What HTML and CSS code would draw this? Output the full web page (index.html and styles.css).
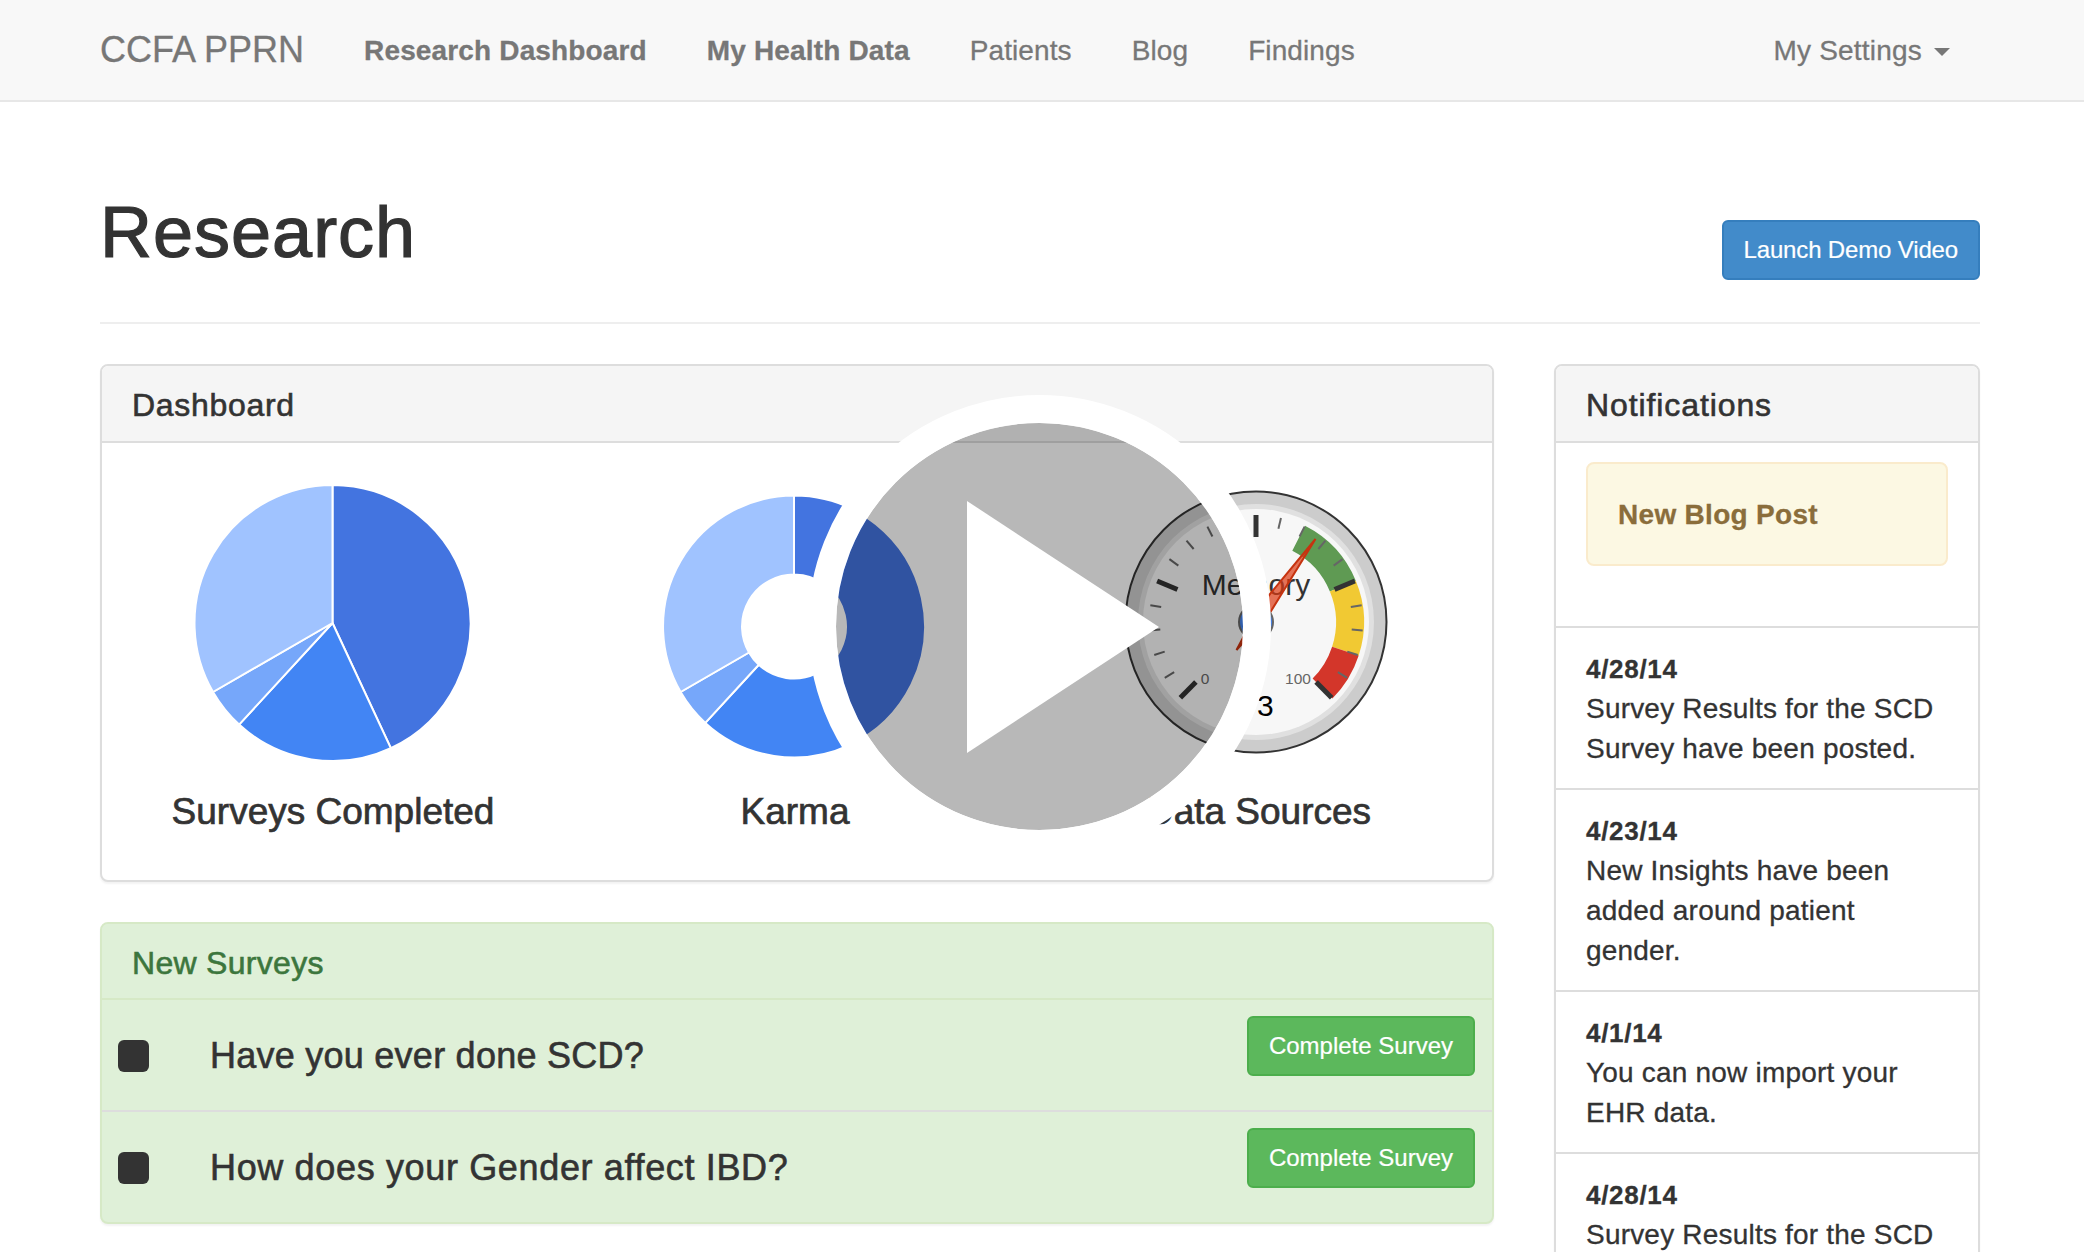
FILE: index.html
```html
<!DOCTYPE html>
<html lang="en">
<head>
    <meta charset="UTF-8">
    <meta name="viewport" content="width=device-width, initial-scale=1.0">
    <title>CCFA PPRN</title>

    <link rel="stylesheet" href="styles.css">
</head>


<body>
    <nav class="navbar">
        <a class="brand">CCFA PPRN</a>
        <a class="nav-link bold">Research Dashboard</a>
        <a class="nav-link bold">My Health Data</a>
        <a class="nav-link">Patients</a>
        <a class="nav-link">Blog</a>
        <a class="nav-link">Findings</a>
        <a class="nav-link settings">My Settings <span class="caret"></span></a>
    </nav>

    <div class="container">
        <div class="page-header">
            <h1>Research</h1>
            <button class="btn btn-blue demo-btn">Launch Demo Video</button>
        </div>

        <div class="columns">
            <div class="main-col">
                <div class="panel">
                    <div class="panel-heading">Dashboard</div>
                    <div class="charts">
                        <div class="chart">
                            <svg class="chart-svg" viewBox="0 0 320 320">
                                <g transform="translate(159.5 161)" stroke="#fff" stroke-width="2">
                                    <path fill="#4374e0" d="M0,0 L0,-138 A138,138 0 0 1 58.3,125.1 Z"/>
                                    <path fill="#4285f4" d="M0,0 L58.3,125.1 A138,138 0 0 1 -93.4,101.6 Z"/>
                                    <path fill="#76a7fa" d="M0,0 L-93.4,101.6 A138,138 0 0 1 -119.5,69 Z"/>
                                    <path fill="#a0c3ff" d="M0,0 L-119.5,69 A138,138 0 0 1 0,-138 Z"/>
                                </g>
                            </svg>
                            <h4>Surveys Completed</h4>
                        </div>

                        <div class="chart">
                            <svg class="chart-svg" viewBox="0 0 320 320">
                                <g transform="translate(159 164.5)" stroke="#fff" stroke-width="2">
                                    <path fill="#4374e0" d="M0,-131 A131,131 0 0 1 55.4,118.7 L22,47.1 A52,52 0 0 0 0,-52 Z"/>
                                    <path fill="#4285f4" d="M55.4,118.7 A131,131 0 0 1 -88.7,96.4 L-35.2,38.3 A52,52 0 0 0 22,47.1 Z"/>
                                    <path fill="#76a7fa" d="M-88.7,96.4 A131,131 0 0 1 -113.4,65.5 L-45,26 A52,52 0 0 0 -35.2,38.3 Z"/>
                                    <path fill="#a0c3ff" d="M-113.4,65.5 A131,131 0 0 1 0,-131 L0,-52 A52,52 0 0 0 -45,26 Z"/>
                                </g>
                            </svg>
                            <h4>Karma</h4>
                        </div>

                        <div class="chart">
                            <svg class="chart-svg" viewBox="0 0 320 320">
                                <g transform="translate(159 160)">
                                    <circle r="130.5" fill="#ccc" stroke="#333" stroke-width="2"/>
                                    <circle r="118" fill="#e0e0e0"/>
                                    <circle r="113" fill="#f7f7f7"/>

                                    <path fill="#5f9a53" d="M49,-96.2 A108,108 0 0 1 99.8,-41.3 L73.9,-30.6 A80,80 0 0 0 36.3,-71.3 Z"/>
                                    <path fill="#f1c933" d="M99.8,-41.3 A108,108 0 0 1 102.7,33.4 L76.1,24.7 A80,80 0 0 0 73.9,-30.6 Z"/>
                                    <path fill="#d3362a" d="M102.7,33.4 A108,108 0 0 1 76.4,76.4 L56.6,56.6 A80,80 0 0 0 76.1,24.7 Z"/>

                                    <g class="major">
                                        <line y1="-85" y2="-107" transform="rotate(-135)"/>
                                        <line y1="-85" y2="-107" transform="rotate(-67.5)"/>
                                        <line y1="-85" y2="-107" transform="rotate(0)"/>
                                        <line y1="-85" y2="-107" transform="rotate(67.5)"/>
                                        <line y1="-85" y2="-107" transform="rotate(135)"/>
                                    </g>
                                    <g class="minor">
                                        <line y1="-96" y2="-107" transform="rotate(-121.5)"/>
                                        <line y1="-96" y2="-107" transform="rotate(-108)"/>
                                        <line y1="-96" y2="-107" transform="rotate(-94.5)"/>
                                        <line y1="-96" y2="-107" transform="rotate(-81)"/>
                                        <line y1="-96" y2="-107" transform="rotate(-54)"/>
                                        <line y1="-96" y2="-107" transform="rotate(-40.5)"/>
                                        <line y1="-96" y2="-107" transform="rotate(-27)"/>
                                        <line y1="-96" y2="-107" transform="rotate(-13.5)"/>
                                        <line y1="-96" y2="-107" transform="rotate(13.5)"/>
                                        <line y1="-96" y2="-107" transform="rotate(27)"/>
                                        <line y1="-96" y2="-107" transform="rotate(40.5)"/>
                                        <line y1="-96" y2="-107" transform="rotate(54)"/>
                                        <line y1="-96" y2="-107" transform="rotate(81)"/>
                                        <line y1="-96" y2="-107" transform="rotate(94.5)"/>
                                        <line y1="-96" y2="-107" transform="rotate(108)"/>
                                        <line y1="-96" y2="-107" transform="rotate(121.5)"/>
                                    </g>

                                    <text class="gauge-title" y="-27" text-anchor="middle">Memory</text>
                                    <text class="gauge-value" x="1" y="94" text-anchor="middle">63</text>
                                    <text class="gauge-limit" x="-51" y="62" text-anchor="middle">0</text>
                                    <text class="gauge-limit" x="42" y="62" text-anchor="middle">100</text>

                                    <polygon class="needle" points="59.5,-83 13.6,-8.7 -19.5,28 3.8,-15.7"/>
                                    <circle r="17" fill="#4684ee" stroke="#666" stroke-width="2"/>
                                </g>
                            </svg>
                            <h4 class="last-label">Data Sources</h4>
                        </div>
                    </div>
                </div>

                <div class="panel panel-green">
                    <div class="panel-heading">New Surveys</div>
                    <div class="survey">
                        <span class="box"></span>
                        <span class="question">Have you ever done SCD?</span>
                        <button class="btn btn-green">Complete Survey</button>
                    </div>
                    <div class="survey survey-grey">
                        <span class="box"></span>
                        <span class="question question-wide">How does your Gender affect IBD?</span>
                        <button class="btn btn-green">Complete Survey</button>
                    </div>
                </div>
            </div>

            <div class="side-col">
                <div class="panel panel-notes">
                    <div class="panel-heading">Notifications</div>
                    <div class="notes-top">
                        <div class="alert">New Blog Post</div>
                    </div>
                    <div class="note">
                        <div class="date">4/28/14</div>
                        Survey Results for the SCD Survey have been posted.
                    </div>
                    <div class="note">
                        <div class="date">4/23/14</div>
                        New Insights have been added around patient gender.
                    </div>
                    <div class="note">
                        <div class="date">4/1/14</div>
                        You can now import your EHR data.
                    </div>
                    <div class="note">
                        <div class="date">4/28/14</div>
                        Survey Results for the SCD Survey have been posted.
                    </div>
                </div>
            </div>
        </div>
    </div>

    <div class="play">
        <div class="triangle"></div>
    </div>
</body>
</html>
```

FILE: styles.css
```css
html, body{
    height: 100%;
    overflow: hidden;
}

body{
    margin: 0;
    position: relative;
    background-color: white;
    color: #333;
    font-family: "Liberation Sans", Arial, sans-serif;
    font-size: 28px;
    line-height: 40px;
    -webkit-text-stroke: 0.3px;
}

.navbar{
    display: flex;
    align-items: center;
    height: 100px;
    padding: 0 104px 0 100px;
    background-color: #f8f8f8;
    border-bottom: 2px solid #e7e7e7;
    color: #777;
}

.brand{
    font-size: 36px;
    margin-right: 30px;
}

.nav-link{
    padding: 2px 30px 0;
    letter-spacing: 0.1px;
}

.bold{
    font-weight: bold;
    letter-spacing: 0.15px;
}

.settings{
    margin-left: auto;
    display: flex;
    align-items: center;
    gap: 12px;
    padding-right: 30px;
    letter-spacing: 0.2px;
}

.caret{
    width: 0;
    height: 0;
    margin-top: 2px;
    border-top: 8px solid #777;
    border-left: 8px solid transparent;
    border-right: 8px solid transparent;
}

.container{
    width: 1880px;
    margin-left: 100px;
}

.page-header{
    display: flex;
    justify-content: space-between;
    align-items: flex-start;
    height: 220px;
    margin-bottom: 40px;
    border-bottom: 2px solid #eee;
}

h1{
    margin: 91px 0 0;
    font-size: 72px;
    font-weight: normal;
    line-height: 79px;
    letter-spacing: 1px;
    -webkit-text-stroke: 1.2px;
}

.btn{
    height: 60px;
    padding: 0 20px;
    border-radius: 6px;
    color: white;
    font-family: "Liberation Sans", Arial, sans-serif;
    font-size: 24px;
    -webkit-text-stroke: 0.2px;
}

.btn-blue{
    background-color: #428bca;
    border: 2px solid #357ebd;
}

.btn-green{
    background-color: #5cb85c;
    border: 2px solid #4cae4c;
}

.demo-btn{
    margin-top: 118px;
    letter-spacing: -0.15px;
}

.columns{
    display: flex;
    gap: 60px;
}

.main-col{
    width: 1394px;
}

.side-col{
    width: 426px;
}

.panel{
    border: 2px solid #ddd;
    border-radius: 8px;
    margin-bottom: 40px;
    background-color: white;
    box-shadow: 0 2px 2px rgba(0, 0, 0, 0.05);
}

.panel-heading{
    height: 73px;
    padding: 2px 30px 0;
    display: flex;
    align-items: center;
    background-color: #f5f5f5;
    border-bottom: 2px solid #ddd;
    border-radius: 6px 6px 0 0;
    font-size: 32px;
    letter-spacing: 0.7px;
    -webkit-text-stroke: 0.6px;
}

.charts{
    display: flex;
    height: 437px;
    padding: 19px 4px 0 0;
    box-sizing: border-box;
}

.chart{
    flex: 1;
    text-align: center;
}

.chart-svg{
    display: block;
    width: 320px;
    height: 320px;
    margin: 0 auto;
    -webkit-text-stroke: 0;
}

h4{
    margin: 10px 0 0;
    font-size: 37px;
    font-weight: normal;
    line-height: 40px;
    -webkit-text-stroke: 0.7px;
}

.last-label{
    padding-left: 4px;
}

.major line{
    stroke: #333;
    stroke-width: 5;
}

.minor line{
    stroke: #666;
    stroke-width: 2;
}

.gauge-title{
    font-size: 30px;
    fill: #333;
}

.gauge-value{
    font-size: 30px;
    letter-spacing: 2px;
    fill: black;
}

.gauge-limit{
    font-size: 15.5px;
    fill: #666;
}

.needle{
    fill: rgba(220, 57, 18, 0.7);
    stroke: #c63310;
    stroke-width: 2;
}

.panel-green{
    background-color: #dff0d8;
    border-color: #d6e9c6;
}

.panel-green .panel-heading{
    height: 70px;
    padding-top: 4px;
    background-color: #dff0d8;
    border-bottom-color: #d6e9c6;
    color: #3c763d;
    letter-spacing: 0.3px;
}

.survey{
    display: flex;
    align-items: center;
    height: 110px;
    padding: 0 17px 0 16px;
}

.survey-grey{
    border-top: 2px solid #ddd;
}

.box{
    width: 31px;
    height: 32px;
    margin-top: 1px;
    border-radius: 6px;
    background-color: #333;
}

.question{
    margin-left: 61px;
    margin-top: 2px;
    font-size: 36px;
    letter-spacing: 0.25px;
    -webkit-text-stroke: 0.6px;
}

.question-wide{
    letter-spacing: 0.65px;
}

.survey .btn{
    margin-left: auto;
    margin-bottom: 18px;
}

.panel-notes .panel-heading{
    letter-spacing: 0.9px;
}

.notes-top{
    padding: 19px 30px 60px;
}

.alert{
    height: 98px;
    padding: 2px 30px 0;
    display: flex;
    align-items: center;
    background-color: #fcf8e3;
    border: 2px solid #faebcc;
    border-radius: 8px;
    color: #8a6d3b;
    font-weight: bold;
    letter-spacing: 0.3px;
}

.note{
    padding: 21px 30px 19px;
    border-top: 2px solid #ddd;
    letter-spacing: 0.2px;
}

.date{
    font-size: 26px;
    font-weight: bold;
    letter-spacing: 0.7px;
}

.play{
    position: absolute;
    left: 808px;
    top: 395px;
    width: 463px;
    height: 463px;
    box-sizing: border-box;
    display: flex;
    align-items: center;
    justify-content: center;
    border: 28px solid white;
    border-radius: 50%;
    background-color: rgba(0, 0, 0, 0.28);
    background-clip: padding-box;
}

.triangle{
    width: 0;
    height: 0;
    margin-left: 47px;
    border-left: 192px solid white;
    border-top: 126px solid transparent;
    border-bottom: 126px solid transparent;
}
```
